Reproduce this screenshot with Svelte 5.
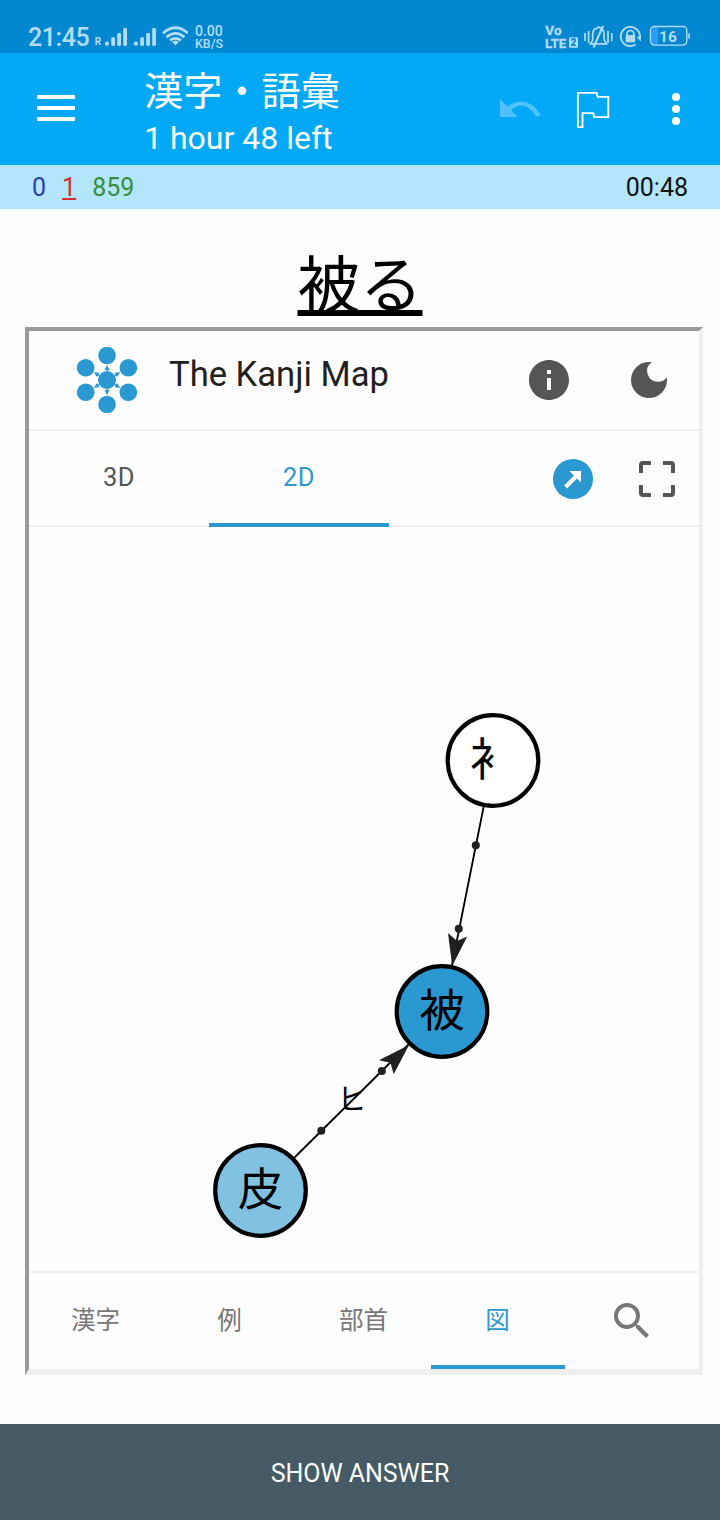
<script>
  const nodes = [
    { id: 'robe', label: '⻂', x: 493, y: 760.5, fill: '#ffffff' },
    { id: 'wear', label: '被', x: 442, y: 1011.5, fill: '#2b99d1' },
    { id: 'skin', label: '皮', x: 260.5, y: 1190.5, fill: '#81c2e2' }
  ];
  const dots = [
    [475.8, 845.3],
    [458.8, 928.8],
    [381.8, 1071],
    [321.3, 1130.8]
  ];
  const petals = [
    [30, 8.5],
    [51.3, 20.8],
    [51.3, 45.3],
    [30, 57.5],
    [8.7, 45.3],
    [8.7, 20.8]
  ];
  const spokes = [0, 60, 120, 180, 240, 300];
  const navItems = ['漢字', '例', '部首', '図'];
  let active = $state('図');
</script>

<div class="screen">
  <div class="status">
    <span class="clock">21:45</span>
    <svg class="signals" width="94" height="28" viewBox="94 24 94 28">
      <text x="94.8" y="44.6" class="roam">R</text>
      <g fill="#b3dcf3">
        <circle cx="107" cy="43.7" r="2.1" />
        <rect x="111.2" y="37.3" width="3.8" height="8.6" rx="1.4" />
        <rect x="117.2" y="33" width="3.8" height="12.9" rx="1.4" />
        <rect x="123.2" y="28" width="3.8" height="17.9" rx="1.4" />
        <circle cx="136" cy="43.7" r="2.1" />
        <rect x="140.2" y="37.3" width="3.8" height="8.6" rx="1.4" />
        <rect x="146.2" y="33" width="3.8" height="12.9" rx="1.4" />
        <rect x="152.2" y="28" width="3.8" height="17.9" rx="1.4" />
        <path d="M175.5 45.5l-3.4-3.4q3.4-3 6.8 0z" />
      </g>
      <g fill="none" stroke="#b3dcf3" stroke-width="2.8">
        <path d="M163 33.3q12.5-11 25 0" />
        <path d="M166.6 37.1q8.9-7.4 17.8 0" />
        <path d="M170 40.4q5.5-4 11 0" />
      </g>
    </svg>
    <div class="rate"><span>0.00</span><span>KB/S</span></div>
    <svg class="system" width="150" height="30" viewBox="543 22 150 30">
      <g class="volte">
        <text transform="translate(545.3 35.2)">Vo</text>
        <text transform="translate(545 47.6) scale(0.97 1)">LTE</text>
      </g>
      <rect x="569" y="37.3" width="9" height="10.4" rx="1" fill="#b3dcf3" />
      <text x="570.6" y="46.2" class="sim">2</text>
      <g fill="none" stroke="#b3dcf3" stroke-width="1.7">
        <path d="M585 33v8M588.6 31v12M608 31v12M611.8 33v8" />
        <path d="M590.5 43.8h16l-2.4-4v-6.5q-.7-4.7-4-5.2-1.2-1.8-3 0-4.3 1-4.4 6v6z" />
        <path d="M603 26l-9.5 21.5" stroke-width="2" />
        <path d="M635.6 44.5a9.6 9.6 0 1 1 4.3-7" stroke-width="1.9" />
        <path d="M627 36v-2a3.5 3.5 0 0 1 7 0v2" stroke-width="1.7" />
      </g>
      <rect x="625.7" y="35" width="9.4" height="7.2" rx="1" fill="#b3dcf3" />
      <path d="M636.8 37l4.3-1-.3 5.6z" fill="#b3dcf3" />
      <path d="M653 27h5v18h-5q-1.5 0-1.5-2v-14q0-2 1.5-2z" fill="#2a9dfb" />
      <rect x="650.5" y="26.5" width="36.3" height="18.6" rx="4" fill="none" stroke="#b3dcf3" stroke-width="1.4" />
      <path d="M689 33.5v5" stroke="#b3dcf3" stroke-width="1.6" />
      <text x="659" y="42.1" class="battery">16</text>
    </svg>
  </div>

  <header class="appbar">
    <svg class="menu" width="38" height="26" viewBox="0 0 38 26">
      <path d="M0 2h38M0 13h38M0 24h38" stroke="#fff" stroke-width="4" />
    </svg>
    <div class="titles">
      <h1>漢字・語彙</h1>
      <p>1 hour 48 left</p>
    </div>
    <svg class="actions" width="190" height="50" viewBox="495 84 190 50">
      <path
        d="M500 99v18h17.8l-6.9-6.8q14-12 25.1 6.5l4.8-1.6q-13.5-21.7-33.3-8.6z"
        fill="#4fc3f9"
      />
      <path
        d="M577.9 92.9h18.8l.9 4h10.7v20.2h-14.1l-.9-4h-10.8v14h-4.6z"
        fill="none"
        stroke="#fff"
        stroke-width="1.9"
      />
      <circle cx="676" cy="97" r="4" fill="#fff" />
      <circle cx="676" cy="109" r="4" fill="#fff" />
      <circle cx="676" cy="121" r="4" fill="#fff" />
    </svg>
  </header>

  <div class="counts">
    <span class="new">0</span>
    <span class="learn">1</span>
    <span class="due">859</span>
    <span class="timer">00:48</span>
  </div>

  <main>
    <div class="word"><span>被</span><span>る</span></div>

    <section class="frame">
      <div class="brand">
        <svg class="logo" width="60" height="66" viewBox="0 0 60 66">
          <g fill="#2b99d1">
            <circle cx="30" cy="33" r="9" />
            {#each petals as [x, y]}
              <circle cx={x} cy={y} r="8.8" />
            {/each}
            {#each spokes as angle}
              <path d="M30 17.7l2.5 5.2h-1.9v2h-1.2v-2h-1.9z" transform="rotate({angle} 30 33)" />
            {/each}
          </g>
        </svg>
        <h2>The Kanji Map</h2>
        <svg class="info" width="48" height="48" viewBox="0 0 24 24">
          <path
            fill="#555"
            d="M12 2C6.48 2 2 6.48 2 12s4.48 10 10 10 10-4.48 10-10S17.52 2 12 2zm1 15h-2v-6h2v6zm0-8h-2V7h2v2z"
          />
        </svg>
        <svg class="moon" width="48" height="48" viewBox="0 0 24 24">
          <path
            fill="#555"
            d="M12 3a9 9 0 1 0 9 9c0-.46-.04-.92-.1-1.36a5.389 5.389 0 0 1-4.4 2.26 5.403 5.403 0 0 1-3.14-9.8c-.44-.06-.9-.1-1.36-.1z"
          />
        </svg>
      </div>

      <div class="tabs">
        <button>3D</button>
        <button class="on">2D</button>
        <svg class="arrow" width="48" height="48" viewBox="0 0 48 48">
          <circle cx="24" cy="24" r="20" fill="#2b99d1" />
          <path fill="#fff" d="M20.5 16H32v11.5l-4-4-9.9 9.9-3-3 9.8-9.9z" />
        </svg>
        <svg class="expand" width="48" height="48" viewBox="0 0 48 48">
          <path
            fill="none"
            stroke="#555"
            stroke-width="4"
            d="M8 18v-8q0-2 2-2h8M30 8h8q2 0 2 2v8M40 30v8q0 2-2 2h-8M18 40h-8q-2 0-2-2v-8"
          />
        </svg>
      </div>

      <svg class="graph" width="670" height="744" viewBox="29 527 670 744">
        <g stroke="#000" stroke-width="1.8">
          <path d="M484 805L452 965" />
          <path d="M293 1159L409 1044" />
        </g>
        <path d="M452.2 966L448 933l9 8 10.2-4.5z" fill="#202020" />
        <path d="M409 1045l-30 15.3 11.5 2.5 3.2 11.4z" fill="#202020" />
        {#each dots as [x, y]}
          <circle cx={x} cy={y} r="4" fill="#202020" />
        {/each}
        <text class="edge" x="351.8" y="1109.8">ヒ</text>
        {#each nodes as node (node.id)}
          <circle cx={node.x} cy={node.y} r="45.3" fill={node.fill} stroke="#000" stroke-width="4.2" />
          <text class="kanji" x={node.x} y={node.y + 15.3}>{node.label}</text>
        {/each}
      </svg>

      <nav>
        {#each navItems as item}
          <button class:on={active === item} onclick={() => (active = item)}>{item}</button>
        {/each}
        <button aria-label="検索">
          <svg width="48" height="48" viewBox="0 0 24 24">
            <path
              fill="#777"
              d="M15.5 14h-.79l-.28-.27A6.471 6.471 0 0 0 16 9.5 6.5 6.5 0 1 0 9.5 16c1.61 0 3.09-.59 4.23-1.57l.27.28v.79l5 4.99L20.49 19l-4.99-5zm-6 0C7.01 14 5 11.99 5 9.5S7.01 5 9.5 5 14 7.01 14 9.5 11.99 14 9.5 14z"
            />
          </svg>
        </button>
      </nav>
    </section>
  </main>

  <button class="answer">SHOW ANSWER</button>
</div>

<style>
  :global(body) {
    background: #fff;
  }
  .screen {
    width: 720px;
    height: 1520px;
    display: flex;
    flex-direction: column;
    overflow: hidden;
    background: #fefefe;
    font-family: Roboto, 'Noto Sans CJK JP', sans-serif;
  }
  .screen * {
    box-sizing: border-box;
  }
  button {
    border: 0;
    padding: 0;
    background: none;
    font: inherit;
  }
  svg {
    display: block;
    flex: none;
  }
  .status {
    height: 53px;
    flex: none;
    display: flex;
    align-items: flex-start;
    padding-left: 28px;
    background: #0288d1;
    color: #b3dcf3;
  }
  .clock {
    width: 66px;
    margin-top: 24px;
    font-size: 25px;
    letter-spacing: -0.4px;
    line-height: 28px;
    font-weight: 500;
  }
  .signals {
    margin-top: 24px;
  }
  .roam {
    font-size: 10px;
    font-weight: 700;
    fill: #b3dcf3;
  }
  .rate {
    width: 40px;
    margin: 25px 0 0 7px;
    display: flex;
    flex-direction: column;
    font-size: 12.4px;
    line-height: 12.6px;
    font-weight: 500;
  }
  .rate span:first-child {
    font-size: 14px;
  }
  .system {
    margin: 22px 27px 0 auto;
  }
  .volte {
    font-size: 13.6px;
    font-weight: 700;
    fill: #b3dcf3;
    stroke: #b3dcf3;
    stroke-width: 0.3;
  }
  .sim {
    font-size: 10px;
    font-weight: 900;
    fill: #0288d1;
  }
  .battery {
    font-size: 15.5px;
    font-weight: 700;
    fill: #b3dcf3;
  }
  .appbar {
    height: 112px;
    flex: none;
    display: flex;
    align-items: flex-start;
    padding-left: 37px;
    background: #03a9f6;
    color: #fff;
  }
  .menu {
    margin-top: 42px;
  }
  .titles {
    margin: 15px 0 0 69px;
  }
  h1,
  h2,
  p {
    margin: 0;
    font-weight: 400;
    white-space: nowrap;
  }
  h1 {
    font-size: 39.2px;
    line-height: 48px;
  }
  p {
    margin-top: -1px;
    font-size: 32px;
    line-height: 46px;
  }
  .actions {
    margin: 31px 35px 0 auto;
  }
  .counts {
    height: 44px;
    flex: none;
    display: flex;
    align-items: center;
    gap: 16px;
    padding: 0 32px;
    background: #b3e5fc;
    font-size: 25px;
  }
  .new {
    color: #303f9f;
  }
  .learn {
    color: #d32f2f;
    text-decoration: underline;
    text-decoration-thickness: 1.5px;
    text-underline-offset: 2px;
  }
  .due {
    color: #388e3c;
  }
  .timer {
    margin-left: auto;
    color: #111;
  }
  main {
    height: 1215px;
    flex: none;
    padding: 30px 17px 0 25px;
  }
  .word {
    height: 88px;
    padding-right: 8px;
    display: flex;
    justify-content: center;
    font: 62.5px/84px 'Noto Sans CJK JP', sans-serif;
    color: #000;
  }
  .word span {
    text-decoration: underline;
    text-decoration-thickness: 6px;
    text-underline-offset: 2px;
    text-decoration-skip-ink: none;
  }
  .frame {
    height: 1048px;
    display: flex;
    flex-direction: column;
    border-style: solid;
    border-width: 4px 4px 6px;
    border-color: #9a9a9a #eee #eee #9a9a9a;
  }
  .brand {
    height: 100px;
    flex: none;
    display: flex;
    align-items: flex-start;
    padding: 0 26px 0 48px;
    border-bottom: 2px solid #eee;
  }
  .logo {
    margin-top: 16px;
  }
  h2 {
    margin: 20px 0 0 32px;
    font-size: 34.6px;
    line-height: 46px;
    color: #212121;
  }
  .info {
    margin: 25px 52px 0 auto;
  }
  .moon {
    margin-top: 25px;
  }
  .tabs {
    height: 96px;
    flex: none;
    display: flex;
    align-items: flex-start;
    padding-right: 18px;
    border-bottom: 2px solid #eee;
  }
  .tabs button {
    width: 180px;
    height: 96px;
    padding-bottom: 4px;
    font-size: 25.5px;
    letter-spacing: 0.4px;
    color: #555;
  }
  .tabs button.on {
    padding-bottom: 0;
    border-bottom: 4px solid #2b99d1;
    color: #2b99d1;
  }
  .arrow {
    margin: 24px 36px 0 auto;
  }
  .expand {
    margin-top: 24px;
  }
  .graph text {
    font-family: 'Noto Sans CJK JP', sans-serif;
    text-anchor: middle;
  }
  .graph .kanji {
    font-size: 45.5px;
  }
  .graph .edge {
    font-size: 29px;
  }
  nav {
    height: 98px;
    flex: none;
    display: flex;
    border-top: 2px solid #eee;
  }
  nav button {
    width: 134px;
    padding: 0 1px 6px 0;
    display: flex;
    align-items: center;
    justify-content: center;
    font-family: 'Noto Sans CJK JP', sans-serif;
    font-size: 24.5px;
    font-weight: 400;
    color: #777;
  }
  nav button:last-child {
    padding: 0;
  }
  nav button.on {
    padding-bottom: 2px;
    border-bottom: 4px solid #2b99d1;
    color: #2b99d1;
  }
  .answer {
    flex: 1;
    background: #455a64;
    color: #fff;
    font-size: 25px;
    letter-spacing: -0.05px;
    padding-top: 3px;
  }
</style>
